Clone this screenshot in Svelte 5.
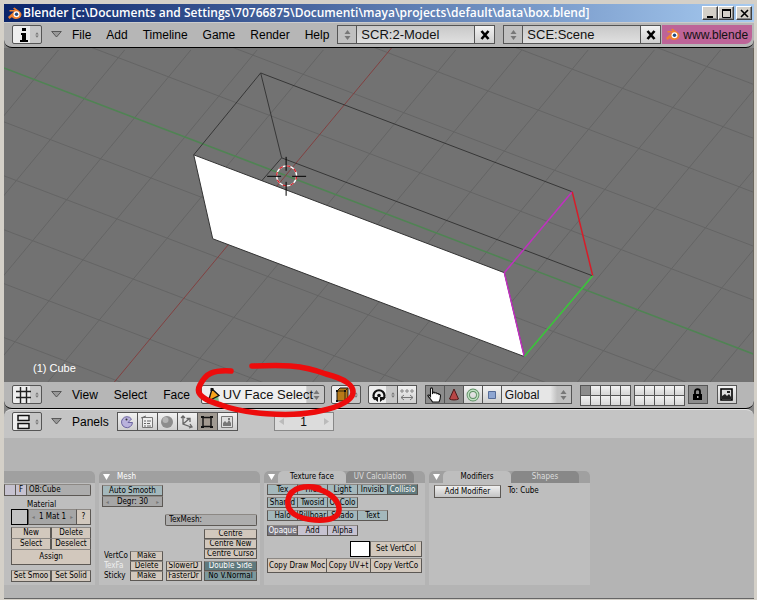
<script>
  const range = (a, b) => Array.from({ length: b - a + 1 }, (_, i) => a + i);
  // Floor grid: one family of lines follows the green axis, the other the red axis.
  const along = range(-6, 6).filter((k) => k !== 0).map((k) => 68 + 54 * k);
  const across = range(-6, 12).filter((k) => k !== 0).map((k) => 390 + 66.3 * k);

  const tabs = ['logic', 'script', 'shading', 'object', 'editing', 'scene'];
  let mode = $state('UV Face Select');
  let screen = $state('SCR:2-Model');
  let scene = $state('SCE:Scene');
  let orientation = $state('Global');
  let objectName = $state('OB:Cube');
  let texMesh = $state('TexMesh:');
</script>

{#snippet arrows()}
  <svg class="arrows" width="7" height="10" viewBox="0 0 7 10" aria-hidden="true">
    <path d="M3.5 0L6.5 4H.5zM3.5 10L.5 6h6z" fill="#777" />
  </svg>
{/snippet}

{#snippet logo()}
  <svg width="15" height="13" viewBox="0 0 15 13" aria-hidden="true">
    <path d="M1 10L7 4.500H2.500V3H8L6 1.500 7.500.5l5 3.800C14.500 6 15 7.500 14 9.500c-1.500 3-7 3.500-9 .5L2.500 12z" fill="#f08030" />
    <circle cx="9.500" cy="7.300" r="3" fill="#fff" />
    <circle cx="9.500" cy="7.300" r="1.700" fill="#234a80" />
  </svg>
{/snippet}

{#snippet disclose()}
  <button class="bare" aria-label="Toggle menus">
    <svg width="11" height="7" viewBox="0 0 11 7"><path d="M.7.5h9.600L5.500 6z" fill="#999" stroke="#444" stroke-width=".8" /></svg>
  </button>
{/snippet}

{#snippet fold()}
  <svg class="fold" width="7" height="6" viewBox="0 0 7 6" aria-hidden="true"><path d="M0 0h7L3.500 6z" fill="#fff" /></svg>
{/snippet}

<div class="window">
  <div class="titlebar">
    {@render logo()}
    <span class="title">Blender [c:\Documents and Settings\70766875\Documenti\maya\projects\default\data\box.blend]</span>
    <button class="win" aria-label="Minimize"><svg width="9" height="9"><path d="M1 8h6" stroke="#000" stroke-width="2" /></svg></button>
    <button class="win" aria-label="Maximize"><svg width="9" height="9"><path d="M.5 0v8.500h8V0" fill="none" stroke="#000" /><path d="M0 1h9" stroke="#000" stroke-width="2" /></svg></button>
    <button class="win close" aria-label="Close"><svg width="9" height="9"><path d="M1 1l7 7M8 1L1 8" stroke="#000" stroke-width="1.600" /></svg></button>
  </div>

  <header class="bar top">
    <button class="ctl type" aria-label="Info window">
      <svg width="18" height="14" viewBox="0 0 18 14"><path d="M7 0h4v3H7zM6 5h5v7h2v2H5v-2h2V7H6z" fill="#000" /></svg>
      {@render arrows()}
    </button>
    {@render disclose()}
    <nav class="menus">
      {#each ['File', 'Add', 'Timeline', 'Game', 'Render', 'Help'] as m}<button class="menu">{m}</button>{/each}
    </nav>
    <div class="group field">
      <button class="ctl sq" aria-label="Browse screens">{@render arrows()}</button>
      <input class="ctl name" aria-label="Screen" bind:value={screen} />
      <button class="ctl sq" aria-label="Delete screen"><svg width="10" height="10"><path d="M1.500 1l7 8M8.500 1l-7 8" stroke="#000" stroke-width="2.600" /></svg></button>
    </div>
    <div class="group field">
      <button class="ctl sq" aria-label="Browse scenes">{@render arrows()}</button>
      <input class="ctl name" aria-label="Scene" bind:value={scene} />
      <button class="ctl sq" aria-label="Delete scene"><svg width="10" height="10"><path d="M1.500 1l7 8M8.500 1l-7 8" stroke="#000" stroke-width="2.600" /></svg></button>
    </div>
    <a class="site" href="#site">{@render logo()}<span>www.blende</span></a>
  </header>

  <main class="view">
    <svg class="scene" viewBox="4 48 750 334" preserveAspectRatio="xMidYMid slice" role="img" aria-label="3D view">
      <g stroke="#646464" stroke-width="1">
        {#each along as y}<path d="M4 {y}l752 287" />{/each}
        {#each across as x}<path d="M{x} 50l-280 337.500" />{/each}
      </g>
      <path d="M4 68l752 287" stroke="#4f8453" stroke-width="1.500" />
      <path d="M392 48l-280 337.500" stroke="#824040" />
      <path d="M194 155L505 273 525 357 213 239z" fill="#fff" stroke="#333" stroke-width="1" />
      <path d="M194 155L261 73 573 192M261 73l21 85 311 118M282 158l-20 23" fill="none" stroke="#363636" stroke-width="1" />
      <path d="M573 192L505 273l20 84" fill="none" stroke="#c030c0" stroke-width="1.500" />
      <path d="M573 192l20.500 84" stroke="#d81c28" stroke-width="1.500" />
      <path d="M593.500 276L525 357" stroke="#38c838" stroke-width="1.500" />
      <circle cx="287" cy="176" r="10" fill="none" stroke="#fff" stroke-width="1.300" />
      <circle cx="287" cy="176" r="10" fill="none" stroke="#d02028" stroke-width="1.300" stroke-dasharray="3.900 3.900" />
      <path d="M267.500 176.500h14M292.500 176.500h14M286.500 157v14M286.500 182v14" stroke="#000" />
    </svg>
    <span class="objlabel">(1) Cube</span>
  </main>

  <header class="bar mid">
    <button class="ctl type" aria-label="3D view window">
      <svg width="18" height="16" viewBox="0 0 18 16"><path d="M5.500 0v16M11.500 0v16M1 4.500h15M1 10.500h15" stroke="#222" stroke-width="1.400" /></svg>
      {@render arrows()}
    </button>
    {@render disclose()}
    <nav class="menus">
      {#each ['View', 'Select', 'Face'] as m}<button class="menu">{m}</button>{/each}
    </nav>
    <div class="mode">
      <svg class="modeicon" width="13" height="16" viewBox="0 0 13 16" aria-hidden="true">
        <path d="M2 15l1-5 8-2 1 7z" fill="#7cbf86" /><path d="M1.500 14L5 2l7 6.500z" fill="#f7a51c" stroke="#111" stroke-width="1.300" /><path d="M3.500 1h3v3h-3z" fill="#111" />
      </svg>
      <select class="ctl" aria-label="Mode" bind:value={mode}><option>UV Face Select</option><option>Object Mode</option><option>Edit Mode</option></select>
      {@render arrows()}
      <svg class="mark" width="170" height="60" viewBox="190 360 170 60" aria-hidden="true">
        <path d="M231 372C213 371 206 374 200 386 194 396 207 402 221 406 245 415 288 418 315 413 333 410 348 404 352 397 357 386 342 379 326 375 300 365 280 366 252 367" fill="none" stroke="#ed0c0c" stroke-width="5.500" stroke-linecap="round" />
      </svg>
    </div>
    <button class="ctl type" aria-label="Draw type">
      <svg width="17" height="16" viewBox="0 0 17 16"><path d="M3 4l3-3h8v9l-3 4H3z" fill="#b87a18" stroke="#111" /><path d="M3 4h8v10M11 4l3-3" fill="none" stroke="#3a2a08" /><path d="M2 3h2v2H2zM10 3h2v2h-2zM2 13h2v2H2zM10 13h2v2h-2z" fill="#111" /></svg>
      {@render arrows()}
    </button>
    <div class="group">
      <button class="ctl type" aria-label="Pivot">
        <svg width="16" height="16" viewBox="0 0 16 16"><path d="M4 12.500A5.500 5.500 0 1 1 12 12.500" fill="none" stroke="#111" stroke-width="2.200" /><path d="M1 10h6v5zM15 10H9v5z" fill="#111" /><circle cx="8" cy="8.500" r="1.800" fill="#111" /></svg>
        {@render arrows()}
      </button>
      <button class="ctl sq" aria-label="Move centers only"><svg width="14" height="12" viewBox="0 0 14 12"><path d="M1 1h2v2H1zM6 1h2v2H6zM11 1h2v2h-2z" fill="none" stroke="#888" /><path d="M1 8.500h12M4 6L1 8.500 4 11M10 6l3 2.500-3 2.500" fill="none" stroke="#777" /></svg></button>
    </div>
    <div class="group hand">
      <button class="ctl sq on" aria-label="Manipulator"><svg width="15" height="16" viewBox="0 0 15 16"><path d="M3.500 2c0-1.500 2-1.500 2 0v5l.5-1.500c1-.8 1.800-.3 2 .5 1-.7 1.800 0 2 .7 1-.6 1.800 0 2 .8 1-.3 1.500.3 1.500 1.300 0 3-.5 4-1.500 6.200H5.500C4.500 12.500 2 11 .8 8.500c.5-1 1.700-.5 2.700 1z" fill="#fff" stroke="#111" stroke-width="1.100" /></svg></button>
      <button class="ctl sq on" aria-label="Translate"><svg width="12" height="13" viewBox="0 0 12 13"><path d="M6 1l4.500 10c-2 1.300-7 1.300-9 0z" fill="#b84646" stroke="#4c1818" /></svg></button>
      <button class="ctl sq" aria-label="Rotate"><svg width="14" height="14" viewBox="0 0 14 14"><circle cx="7" cy="7" r="4.700" fill="none" stroke="#5d8d62" stroke-width="3.400" /><circle cx="7" cy="7" r="4.700" fill="none" stroke="#bfe0c2" stroke-width="1.600" /></svg></button>
      <button class="ctl sq" aria-label="Scale"><svg width="10" height="10"><path d="M1.500 1.500h7v7h-7z" fill="#8ea6d2" stroke="#566c98" /></svg></button>
      <div class="orient">
        <select class="ctl" aria-label="Orientation" bind:value={orientation}><option>Global</option><option>Local</option><option>Normal</option></select>
        {@render arrows()}
      </div>
    </div>
    <div class="layersets">
      {#each [0, 1] as set}
        <div class="layers">
          {#each range(0, 9) as i}<button class:on={set === 0 && i === 0} aria-label="Layer {set * 10 + i + 1}"></button>{/each}
        </div>
      {/each}
      <button class="ctl sq on" aria-label="Lock layers"><svg width="11" height="13" viewBox="0 0 11 13"><path d="M3 6V3.500c0-3 5-3 5 0V6" fill="none" stroke="#000" stroke-width="1.800" /><path d="M1 6h9v6H1z" fill="#000" /><path d="M5 8h1.500v2H5z" fill="#aaa" /></svg></button>
    </div>
    <button class="ctl sq" aria-label="Render view"><svg width="13" height="13" viewBox="0 0 13 13"><path d="M1 1h11v11H1z" fill="#ddd" stroke="#000" stroke-width="1.600" /><path d="M2 10V8l3-2 2 2 2-2 2 3v2H2zM7 3h3v2H7z" fill="#222" /></svg></button>
  </header>

  <header class="bar low">
    <button class="ctl type" aria-label="Buttons window">
      <svg width="18" height="16" viewBox="0 0 18 16"><path d="M3 1.500h11v5H3zM3 9.500h11v5H3z" fill="#eee" stroke="#111" stroke-width="1.500" /></svg>
      {@render arrows()}
    </button>
    {@render disclose()}
    <nav class="menus"><button class="menu">Panels</button></nav>
    <div class="group contexts">
      {#each tabs as t}
        <button class="ctl sq" class:on={t === 'editing'} aria-label={t}>
          <svg width="14" height="14" viewBox="0 0 14 14">
            {#if t === 'logic'}
              <path d="M8 7.500h4.500A5.500 5.500 0 1 1 11.500 4z" fill="#b9b2dc" stroke="#6c64a0" /><circle cx="6.500" cy="4.500" r="1" fill="#333" />
            {:else if t === 'script'}
              <path d="M2.500 2.500h10v10h-10z" fill="#eee" stroke="#777" /><path d="M1 3l5-2M4 6h2m1 0h4M4 8.500h2m1 0h3M4 11h2m1 0h4" stroke="#666" />
            {:else if t === 'shading'}
              <circle cx="7" cy="7" r="6" fill="#8d8d8d" /><circle cx="5.500" cy="5" r="3" fill="#b5b5b5" />
            {:else if t === 'object'}
              <path d="M3 1v8l8 3M3 9l6-5M1 3l2-2 2 2M9 13l3-1-2-3M6.500 3.500H10V7" fill="none" stroke="#666" stroke-width="1.300" />
            {:else if t === 'editing'}
              <path d="M3 2.500h8v9H3z" fill="#a39a90" stroke="#111" stroke-width="1.400" /><path d="M1 1h3v2H1zM10 1h3v2h-3zM1 11h3v2H1zM10 11h3v2h-3z" fill="#111" />
            {:else}
              <path d="M1.500 1.500h11v11h-11z" fill="#ddd" stroke="#777" /><path d="M3 11V8l2-2 2 2 2-3 2 3v3zM8 3h2v2H8z" fill="#777" />
            {/if}
          </svg>
        </button>
      {/each}
    </div>
    <div class="ctl frame">
      <button class="bare" aria-label="Previous frame"><svg width="5" height="7"><path d="M5 0v7L0 3.500z" fill="#bbb" /></svg></button>
      <span>1</span>
      <button class="bare" aria-label="Next frame"><svg width="5" height="7"><path d="M0 0v7l5-3.500z" fill="#bbb" /></svg></button>
    </div>
  </header>

  <section class="panels">
    <article class="panel first">
      <h2 class="phead"></h2>
      <div class="pbody">
        <div class="row obrow">
          <button class="pb lav" aria-label="Parent"></button>
          <button class="pb lav">F</button>
          <input class="pb txt" aria-label="Object name" bind:value={objectName} />
        </div>
        <span class="mat">Material</span>
        <div class="row matrow">
          <button class="swatch grey" aria-label="Material colour"></button>
          <button class="pb num"><i>◂</i>1 Mat 1<i>▸</i></button>
          <button class="pb">?</button>
        </div>
        <div class="two"><button class="pb">New</button><button class="pb">Delete</button><button class="pb">Select</button><button class="pb">Deselect</button><button class="pb wide">Assign</button></div>
        <div class="two last"><button class="pb">Set Smoo</button><button class="pb">Set Solid</button></div>
      </div>
    </article>

    <article class="panel">
      <h2 class="phead">{@render fold()}<span class="solo">Mesh</span></h2>
      <div class="pbody">
        <div class="stack auto"><button class="pb teal">Auto Smooth</button><button class="pb num"><i>◂</i>Degr: 30<i>▸</i></button></div>
        <input class="pb txt tex" aria-label="TexMesh" bind:value={texMesh} />
        <div class="cols">
          <div class="keys">
            <span>VertCo</span><button class="pb">Make</button>
            <span class="lit">TexFa</span><button class="pb">Delete</button>
            <span>Sticky</span><button class="pb">Make</button>
          </div>
          <div class="stack slow"><button class="pb">SlowerD</button><button class="pb">FasterDr</button></div>
          <div class="stack right">
            <button class="pb">Centre</button><button class="pb">Centre New</button><button class="pb">Centre Curso</button>
            <button class="pb deep sep">Double Side</button><button class="pb deep dk">No V.Normal</button>
          </div>
        </div>
      </div>
    </article>

    <article class="panel">
      <h2 class="phead">{@render fold()}<button class="tab open">Texture face</button><button class="tab">UV Calculation</button></h2>
      <div class="pbody faces">
        <div class="row five">{#each ['Tex', 'Tiles', 'Light', 'Invisib'] as b}<button class="pb teal">{b}</button>{/each}<button class="pb deep">Collisio</button></div>
        <div class="row five">{#each ['Shared', 'Twosid', 'ObColo'] as b}<button class="pb teal">{b}</button>{/each}
          <svg class="mark" width="70" height="50" viewBox="280 478 70 50" aria-hidden="true">
            <path d="M319 489C306 486 290 488 288 501 286 514 299 520 315 521 331 522 340 518 339 509 338 500 328 492 314 489" fill="none" stroke="#ed0c0c" stroke-width="5.500" stroke-linecap="round" />
          </svg>
        </div>
        <div class="row five">{#each ['Halo', 'Billboar', 'Shado', 'Text'] as b}<button class="pb teal">{b}</button>{/each}</div>
        <div class="row five blend"><button class="pb sel">Opaque</button><button class="pb lav">Add</button><button class="pb lav">Alpha</button></div>
        <div class="row vcol"><button class="swatch" aria-label="Vertex colour"></button><button class="pb">Set VertCol</button></div>
        <div class="row copy"><button class="pb">Copy Draw Moc</button><button class="pb">Copy UV+t</button><button class="pb">Copy VertCo</button></div>
      </div>
    </article>

    <article class="panel">
      <h2 class="phead">{@render fold()}<button class="tab open">Modifiers</button><button class="tab">Shapes</button></h2>
      <div class="pbody"><div class="row mods"><button class="pb add">Add Modifier</button><span>To: Cube</span></div></div>
    </article>
  </section>
</div>

<style>
  :global(body) { margin: 0; background: #d4d0c8; }
  .window { box-sizing: border-box; min-height: 100vh; display: flex; flex-direction: column; border: solid #d4d0c8; border-width: 4px 3px 2px 4px; background: #858585; font: 12px/16px "Liberation Sans", Arial, sans-serif; color: #000; overflow: hidden; }
  .window :global(*) { box-sizing: border-box; }
  button, input, select { font: inherit; color: inherit; margin: 0; padding: 0; border: 0; border-radius: 0; background: none; outline: 0; }
  svg { flex: none; display: block; }

  .titlebar { display: flex; align-items: center; height: 18px; padding: 0 2px 0 3px; background: linear-gradient(90deg, #0a246a, #a6caf0); color: #fff; }
  .title { flex: 1; min-width: 0; margin-left: 1px; overflow: hidden; white-space: nowrap; font: 600 12px/18px "Open Sans", sans-serif; }
  .win { width: 16px; height: 14px; display: grid; place-items: center; background: #d4d0c8; border: 1px solid; border-color: #fff #404040 #404040 #fff; box-shadow: inset -1px -1px #888; }
  .close { margin-left: 2px; }

  .bar { display: flex; align-items: center; height: 26px; padding-left: 8px; background: #b6b6b6; border-bottom: 1px solid #000; flex: none; }
  .top { border-radius: 0 0 8px 8px; box-shadow: inset 0 1px #ccc; }
  .mid { height: 27px; border-radius: 0 0 8px 8px; }
  .low { height: 29px; padding-bottom: 4px; background: #c4c4c4; border: 0; border-top: 1px solid #e4e4e4; border-radius: 8px 8px 0 0; }
  .ctl { height: 19px; background: linear-gradient(#f2f2f2, #cfcfcf); border: 1px solid #555; color: #111; }
  .type { width: 30px; display: flex; align-items: center; justify-content: space-between; padding: 0 2px; border-radius: 2px; background: linear-gradient(90deg, #eee 60%, #c6c6c6 61%); }
  .type .arrows { width: 4px; }
  .sq { width: 20px; display: grid; place-items: center; margin-right: -1px; flex: none; }
  .on { background: #8c8c8c; }
  .bare { display: grid; place-items: center; }
  .type + .bare { margin-left: 8px; width: 12px; }
  .menus { display: flex; gap: 15px; margin-left: 10px; }
  .mid .menus { gap: 16px; }
  .menu { display: block; white-space: nowrap; }
  .group { display: flex; }
  .field { width: 158px; margin-left: 8px; }
  .field .sq:first-child { background: #c0c0c0; }
  .name { flex: 1; min-width: 0; padding-left: 4px; font-size: 13px; background: linear-gradient(#c8c8c8, #e0e0e0); }
  .field .sq:last-child { width: 21px; margin: 0 0 0 -1px; }
  .site { display: flex; flex: 1; min-width: 0; align-items: center; gap: 3px; height: 19px; margin: 0 2px 0 1px; padding-left: 3px; overflow: hidden; background: #bd6498; color: #111; text-decoration: none; border-radius: 0 0 7px 0; }

  .view { position: relative; display: flex; flex: 1; min-height: 0; height: 334px; background: #727272; border-right: 1px solid #6a665e; }
  .scene { flex: 1; min-width: 0; width: 100%; }
  .objlabel { position: absolute; left: 29px; bottom: 6px; color: #fff; font-size: 11px; }

  .mode { position: relative; width: 124px; margin: 0 6px 0 11px; }
  .mode select { display: block; width: 100%; padding-left: 21px; appearance: none; font-size: 13px; border-radius: 2px; background: linear-gradient(90deg, #eee 85%, #c6c6c6 86%); }
  .modeicon { position: absolute; left: 6px; top: 2px; }
  .mode > .arrows, .orient > .arrows { position: absolute; right: 5px; top: 5px; }
  .mark { position: absolute; z-index: 3; pointer-events: none; }
  .mode .mark { left: -11px; top: -26px; }
  .mode + .type { margin-right: 7px; }
  .group > .type { margin-right: -1px; border-radius: 2px 0 0 2px; }
  .hand { margin-left: 9px; }
  .orient { position: relative; width: 71px; }
  .orient select { display: block; width: 100%; padding-left: 3px; appearance: none; background: linear-gradient(90deg, #e6e6e6 70%, #c0c0c0 80%); }
  .layersets { display: flex; margin: 0 10px 0 8px; }
  .layers { display: grid; grid-template-columns: repeat(5, 10px); width: 50px; height: 20px; margin-right: 4px; }
  .layers button { border: 1px solid #555; margin: 0 -1px -1px 0; background: linear-gradient(#f2f2f2, #d6d6d6); }
  .layers .on { background: #8c8c8c; }
  .contexts { margin-left: 8px; }
  .contexts .sq { width: 21px; }
  .contexts .on { background: #a09a92; }
  .frame { width: 60px; display: flex; justify-content: space-between; align-items: center; margin-left: 37px; padding: 0 4px; border-color: #888; background: #dcdcdc; }

  .panels { display: flex; gap: 4px; height: 161px; padding-top: 33px; background: #b4b4b4; border-bottom: 1px solid #666; overflow: hidden; font: 8px/10px "DejaVu Sans Condensed", "DejaVu Sans", sans-serif; flex: none; }
  .panel { width: 161px; height: 114px; flex: none; display: flex; flex-direction: column; background: #bebebe; border-radius: 5px 5px 0 0; }
  .first { width: 91px; }
  .phead { display: flex; align-items: center; height: 12px; margin: 0; padding-left: 4px; background: #a0a0a0; border-radius: 5px 5px 0 0; font: inherit; color: #fff; }
  .first .phead { border-radius: 0 5px 0 0; }
  .solo { margin-left: 7px; }
  .tab { height: 12px; width: 68px; line-height: 12px; border-radius: 5px 5px 0 0; background: #888; color: #ddd; }
  .open { margin-left: 3px; background: #bebebe; color: #000; }
  .pbody { padding: 2px 3px 0; display: flex; flex-direction: column; flex: 1; }
  .pb { height: 11px; min-width: 0; padding: 0; border: 1px solid #5c5854; border-top-color: #8c8884; background: #d2c8bd; overflow: hidden; white-space: nowrap; text-align: center; margin-right: -1px; line-height: 9px; }
  .row { display: flex; position: relative; }
  .row > :last-child, .stack .pb, .tex { margin-right: 0; }
  .lav { background: #c6c2d0; }
  .teal { background: #a4b8bc; }
  .deep { background: #5f7a7e; color: #fff; }
  .dk { color: #000; background: #7c989c; }
  .sel { background: #77757f; color: #fff; }
  .txt { text-align: left; background: #adadad; padding-left: 2px; border-radius: 2px; }
  .num { display: flex; justify-content: space-between; align-items: center; background: #a6a6a6; padding: 0 3px; }
  .num i { font-style: normal; color: #777; font-size: 6px; }
  .first .pbody { padding: 1px 4px 0 7px; }
  .obrow { margin-left: -7px; }
  .obrow .pb { width: 12px; height: 12px; }
  .obrow .txt { flex: 1; }
  .mat { margin: 4px 0 0 16px; line-height: 9px; }
  .matrow .num { flex: 1; }
  .matrow .pb { height: 16px; }
  .matrow .pb:last-child { width: 15px; }
  .swatch { width: 20px; height: 16px; border: 1px solid #000; background: #fff; }
  .grey { width: 17px; background: #c2c2c2; }
  .two { display: grid; grid-template-columns: 1fr 1fr; margin: 2px 0 0; }
  .two .pb { margin: 0 0 -1px; height: 12px; }
  .two .wide { grid-column: 1 / 3; height: 16px; margin: 0; }
  .last { margin-top: 5px; }
  .stack { display: flex; flex-direction: column; }
  .stack .pb { flex: none; }
  .auto { width: 61px; }
  .tex { width: 92px; height: 12px; margin: 7px 0 0 auto; padding-left: 3px; }
  .cols { display: flex; align-items: flex-end; justify-content: space-between; margin-top: 3px; }
  .keys { display: grid; grid-template-columns: 26px 33px; grid-auto-rows: 10px; margin-left: 2px; }
  .keys span { overflow: hidden; white-space: nowrap; }
  .keys .pb { margin: 0; }
  .lit { color: #eee; }
  .slow { width: 36px; }
  .right { width: 53px; }
  .right .sep { margin-top: 2px; }
  .cols .stack .pb, .keys .pb { height: 10px; line-height: 8px; }
  .faces { padding-top: 1px; }
  .five { margin-bottom: 2px; }
  .five .pb { width: 31px; height: 11px; margin-right: -1px; }
  .five .mark { left: 13px; top: -20px; }
  .blend { margin: 2px 0 5px; }
  .vcol { justify-content: flex-end; }
  .vcol .pb { width: 52px; height: 16px; line-height: 14px; }
  .copy { margin-top: 1px; }
  .copy .pb { height: 15px; width: 60px; line-height: 13px; }
  .copy .pb:nth-child(2) { width: 45px; }
  .copy .pb:last-child { width: 52px; }
  .mods { align-items: center; padding-left: 2px; gap: 8px; }
  .mods .add { width: 67px; height: 13px; line-height: 11px; background: linear-gradient(#f0f0f0, #c4c4c4); }
</style>
